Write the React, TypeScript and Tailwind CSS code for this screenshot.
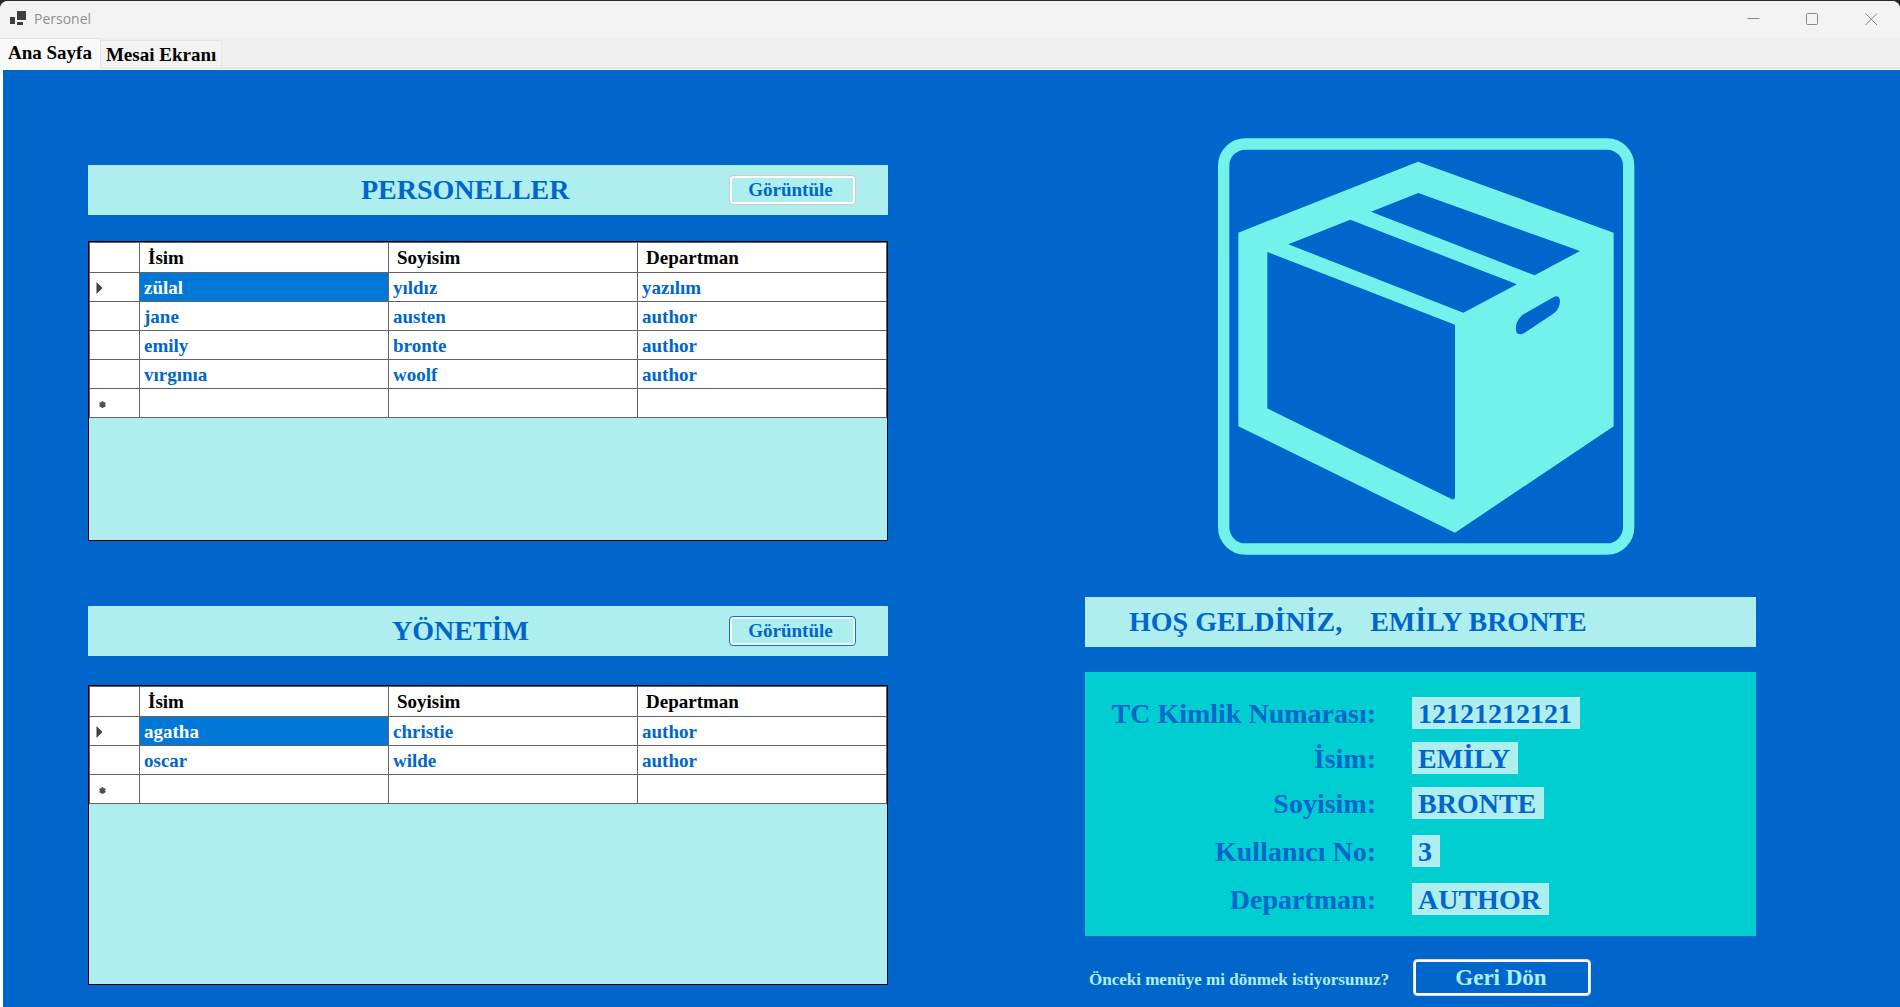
import React from "react";

type Row = [string, string, string];

const personnel: Row[] = [
  ["zülal", "yıldız", "yazılım"],
  ["jane", "austen", "author"],
  ["emily", "bronte", "author"],
  ["vırgınıa", "woolf", "author"],
];

const management: Row[] = [
  ["agatha", "christie", "author"],
  ["oscar", "wilde", "author"],
];

function TitleBar() {
  return (
    <header className="flex h-[37px] items-center bg-[#f3f3f3] pr-[22px] pb-px pl-[10px]">
      <svg className="mb-0.5" width="16" height="15" viewBox="0 0 16 15" fill="#404040" aria-hidden="true">
        <rect x="7" y="0" width="9" height="9" />
        <rect x="0" y="6" width="5" height="7" />
        <rect x="7" y="11" width="6" height="3" />
      </svg>
      <h1 className="ml-2 font-['Open_Sans',sans-serif] text-sm text-[#8f8f8f]">Personel</h1>
      <div className="ml-auto flex gap-[46px] text-[#8a8a8a]">
        <button type="button" aria-label="Simge durumuna küçült">
          <svg width="13" height="13" viewBox="0 0 13 13" fill="none" stroke="currentColor">
            <path d="M0.5 5.5H12.5" />
          </svg>
        </button>
        <button type="button" aria-label="Ekranı kapla">
          <svg width="13" height="13" viewBox="0 0 13 13" fill="none" stroke="currentColor">
            <rect x="0.5" y="0.5" width="11" height="11" rx="1" />
          </svg>
        </button>
        <button type="button" aria-label="Kapat">
          <svg width="13" height="13" viewBox="0 0 13 13" fill="none" stroke="currentColor">
            <path d="M0.5 0.5L12 12M12 0.5L0.5 12" />
          </svg>
        </button>
      </div>
    </header>
  );
}

function Tabs() {
  return (
    <div role="tablist" className="flex h-8 items-end border-b border-white bg-[#efefef] text-[19px] font-bold text-black">
      <button
        type="button"
        role="tab"
        aria-selected="true"
        className="h-[31px] border-t border-r border-[#e5e5e5] bg-[#f9f9f9] px-2 pb-[3px] leading-none"
      >
        Ana Sayfa
      </button>
      <button
        type="button"
        role="tab"
        aria-selected="false"
        className="h-[29px] border-t border-r border-b border-[#e5e5e5] bg-[#f3f3f3] px-[5px] leading-none"
      >
        Mesai Ekranı
      </button>
      <div className="h-0 flex-1 border-b border-[#e0e0e0]" />
    </div>
  );
}

function SectionHeader({ title, indent, focused }: { title: string; indent: string; focused?: boolean }) {
  return (
    <div className="flex h-[50px] items-center bg-[#afeeee] pr-8">
      <h2 className={`${indent} flex-1 text-[28px]`}>{title}</h2>
      <button
        type="button"
        className={`h-[30px] w-[127px] rounded border pr-1 pb-0.5 text-[19px] leading-none font-bold shadow-[inset_0_0_0_2px_white] ${
          focused ? "border-[#0078d7]" : "border-[#cbcbcb]"
        }`}
      >
        Görüntüle
      </button>
    </div>
  );
}

function CurrentRowMark() {
  return (
    <svg className="mt-px" width="7" height="12" viewBox="0 0 7 12" fill="#404040" aria-hidden="true">
      <path d="M0.5 0L6.5 6L0.5 12Z" />
    </svg>
  );
}

function NewRowMark() {
  return (
    <svg className="mt-[3px] ml-[3px]" width="7" height="7" viewBox="0 0 7 7" aria-hidden="true">
      <path d="M3.5 0V7M0.5 1.8L6.5 5.2M6.5 1.8L0.5 5.2" stroke="#606060" strokeWidth="1.6" />
      <circle cx="3.5" cy="3.7" r="2.7" fill="#505050" />
    </svg>
  );
}

function DataGrid({ label, rows }: { label: string; rows: Row[] }) {
  const line = "border-r border-b border-[#646464]";
  return (
    <div className="h-[300px] border border-black bg-[#afeeee]">
      <table
        aria-label={label}
        className="w-full table-fixed border-separate border-spacing-0 border-t border-l border-[#646464] bg-white text-[19px] leading-none font-bold"
      >
        <colgroup>
          <col className="w-[50px]" />
          <col />
          <col />
          <col />
        </colgroup>
        <thead>
          <tr className="h-[30px] text-left text-black">
            <td className={line} />
            <th scope="col" className={`${line} pl-2`}>İsim</th>
            <th scope="col" className={`${line} pl-2`}>Soyisim</th>
            <th scope="col" className={`${line} pl-2`}>Departman</th>
          </tr>
        </thead>
        <tbody>
          {rows.map((row, r) => (
            <tr key={r} className="h-[29px]">
              <td className={`${line} pl-1.5`}>{r === 0 && <CurrentRowMark />}</td>
              {row.map((cell, c) => (
                <td key={c} className={`${line} pl-1 ${r === 0 && c === 0 ? "bg-[#0078d7] text-white" : ""}`}>
                  {cell}
                </td>
              ))}
            </tr>
          ))}
          <tr className="h-[29px]">
            <td className={`${line} pl-1.5`}>
              <NewRowMark />
            </td>
            <td className={line} />
            <td className={line} />
            <td className={line} />
          </tr>
        </tbody>
      </table>
    </div>
  );
}

function BoxLogo() {
  return (
    <svg className="ml-[133px] block" width="417" height="417" viewBox="54 52 1251 1251" role="img" aria-label="Kutu">
      <rect x="71" y="70" width="1215" height="1215" rx="65" fill="none" stroke="#72f2ea" strokeWidth="34" />
      <path
        fill="#72f2ea"
        fillRule="evenodd"
        d="M654 123L1241 336V917L765 1236L115 917V336Z
           M655 217L513 273L1004 464L1140 391Z
           M451 297L265 371L790 576L951 491Z
           M202 394V863L756 1136Q765 1138 765 1129V612Z
           M1060 530L972 580C952 592 944 618 949 634Q955 645 972 638L1062 578C1078 566 1083 545 1078 532Q1073 523 1060 530Z"
      />
    </svg>
  );
}

function Field({ label, value }: { label: string; value: string }) {
  return (
    <div className="flex h-8 items-center gap-9">
      <dt className="w-[291px] pt-0.5 text-right">{label}</dt>
      <dd className="flex h-8 items-center bg-[#afeeee] pt-0.5 pr-2 pl-1.5">{value}</dd>
    </div>
  );
}

export default function App() {
  return (
    <div className="bg-[#2b2729] pt-px">
      <div className="flex min-h-[calc(100vh-1px)] flex-col overflow-hidden rounded-t-lg bg-white font-['Liberation_Serif','Times_New_Roman',serif]">
        <TitleBar />
        <Tabs />
        <main className="ml-[3px] flex flex-1 gap-[197px] bg-[#0066cc] pr-36 pl-[85px] font-bold text-[#0066cc]">
          <div className="flex-[800] pt-[95px] pb-[22px]">
            <section>
              <SectionHeader title="PERSONELLER" indent="pl-[273px]" />
              <div className="mt-[26px]">
                <DataGrid label="Personeller" rows={personnel} />
              </div>
            </section>
            <section className="mt-[65px]">
              <SectionHeader title="YÖNETİM" indent="pl-[304px]" focused />
              <div className="mt-[29px]">
                <DataGrid label="Yönetim" rows={management} />
              </div>
            </section>
          </div>

          <div className="flex-[671] pt-[68px]">
            <BoxLogo />
            <h2 className="mt-[42px] flex h-[50px] items-center gap-7 bg-[#afeeee] pl-11 text-[28px]">
              <span>HOŞ GELDİNİZ,</span>
              <span>EMİLY BRONTE</span>
            </h2>
            <section className="mt-[25px] bg-[#00ced1] pt-[25px] pb-[21px] text-[28px] leading-none">
              <dl className="flex flex-col gap-[13px]">
                <Field label="TC Kimlik Numarası:" value="12121212121" />
                <Field label="İsim:" value="EMİLY" />
                <Field label="Soyisim:" value="BRONTE" />
              </dl>
              <dl className="mt-4 flex flex-col gap-4">
                <Field label="Kullanıcı No:" value="3" />
                <Field label="Departman:" value="AUTHOR" />
              </dl>
            </section>
            <div className="mt-[23px] flex items-center text-[#afeeee]">
              <p className="w-[328px] pt-1 pl-1 text-[17px] whitespace-nowrap">Önceki menüye mi dönmek istiyorsunuz?</p>
              <button
                type="button"
                className="h-[37px] w-[178px] rounded border border-[#d8dde6] pr-0.5 text-[23px] leading-none shadow-[inset_0_0_0_2px_white]"
              >
                Geri Dön
              </button>
            </div>
          </div>
        </main>
      </div>
    </div>
  );
}
